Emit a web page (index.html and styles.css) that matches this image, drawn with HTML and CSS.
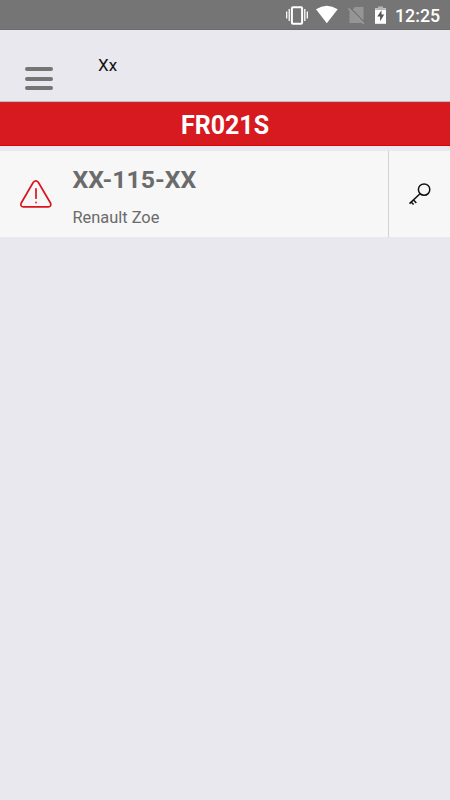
FILE: index.html
```html
<!DOCTYPE html>
<html lang="en">
<head>
<meta charset="utf-8">
<title>Vehicles</title>
<link rel="stylesheet" href="styles.css">
</head>
<body>
<div class="status">
  <svg class="status-icons" width="104" height="30" viewBox="286 0 104 30">
    <rect x="291.9" y="7.2" width="10.2" height="16.6" rx="1" fill="none" stroke="#fff" stroke-width="2"/>
    <path d="M289.2 9v12M304.8 9v12M286.7 11.5v7M307.3 11.5v7" stroke="#fff" stroke-width="1.3"/>
    <path d="M316 9.3Q326.800 2.200 337.700 9.300L326.800 23.200Z" fill="#fff"/>
    <path d="M355 7h8.500v13.500L352.700 9.500ZM349.500 10.500L362 23H349.500Z" fill="#959595"/>
    <path d="M348.500 8.500L363.800 23.800" stroke="#a0a0a0" stroke-width="1.500"/>
    <path d="M375 8.300h11v15.500h-11Z" fill="#fff"/>
    <path d="M378 6.400h5v2h3v1.600h-11v-1.600h3Z" fill="#b5b5b5"/>
    <path d="M381.500 10.300L377.200 16.400H380.100V21.300L384.200 14.600H381.500Z" fill="#555"/>
  </svg>
  <span class="clock">12:25</span>
</div>
<header class="header">
  <div class="menu"><i></i><i></i><i></i></div>
  <span class="user">Xx</span>
</header>
<div class="banner">FR021S</div>
<main class="card">
  <div class="warning">
    <svg width="34" height="30" viewBox="19 179 34 30" fill="none" stroke="#d9141c" stroke-width="1.700" stroke-linecap="round" stroke-linejoin="round">
      <path d="M33.300 182.300Q35.800 179.500 38.300 182.300L50.600 203.200Q51.600 206.700 48.300 206.900H23.500Q20.100 206.700 21.100 203.200Z"/>
      <path d="M36 188.800V198.200M36 202.400V202.600"/>
    </svg>
  </div>
  <div class="info">
    <div class="plate">XX-115-XX</div>
    <div class="model">Renault Zoe</div>
  </div>
  <div class="key">
    <svg width="24" height="24" viewBox="408 182 24 24" fill="none" stroke="#111" stroke-width="1.500">
      <circle cx="424.100" cy="189.600" r="5.700"/>
      <path d="M420 193.700L409.500 203.600M411 201.700L413.600 204.500M413.300 199.700L416.300 203"/>
    </svg>
  </div>
</main>
</body>
</html>
```
FILE: styles.css
```css
* { box-sizing: border-box; }
body {
  margin: 0;
  min-height: 800px;
  background: #e9e8ee;
  font-family: Roboto, "Liberation Sans", sans-serif;
}
svg { display: block; }
.status {
  height: 30px;
  padding-right: 10px;
  display: flex;
  justify-content: flex-end;
  align-items: center;
  background: #757575;
  border-bottom: 1px solid #6c6c6c;
}
.status-icons { flex: none; }
.clock {
  width: 45px;
  margin-left: 5px;
  padding-top: 2px;
  color: #fff;
  font-size: 17.8px;
  font-weight: 500;
  line-height: 22px;
}
.header {
  height: 72px;
  padding-left: 25px;
  display: flex;
  align-items: flex-start;
  border-bottom: 1px solid #c2babd;
}
.menu {
  width: 28px;
  padding-top: 37px;
  display: flex;
  flex-direction: column;
  gap: 5.7px;
}
.menu i {
  height: 4px;
  border-radius: 2px;
  background: #757575;
}
.user {
  margin: 24px 0 0 45px;
  color: #111;
  font-size: 17px;
  line-height: 22px;
}
.banner {
  height: 44px;
  background: #d71920;
  border-top: 1px solid #c9242b;
  border-bottom: 1px solid #d90008;
  color: #fff;
  font-size: 25px;
  font-weight: 700;
  line-height: 46px;
  text-align: center;
}
.card {
  height: 86px;
  margin-top: 5px;
  display: flex;
  background: #f7f7f7;
}
.warning { width: 72.5px; padding: 28px 0 0 19px; }
.info { flex: 1; color: #6b6b6b; }
.plate {
  margin-top: 13px;
  font-size: 24.8px;
  font-weight: 700;
  line-height: 31px;
}
.model {
  margin-top: 11px;
  font-size: 16.4px;
  line-height: 23px;
}
.key {
  width: 62px;
  padding: 31px 0 0 19px;
  border-left: 1px solid #d2d2d2;
}
```
